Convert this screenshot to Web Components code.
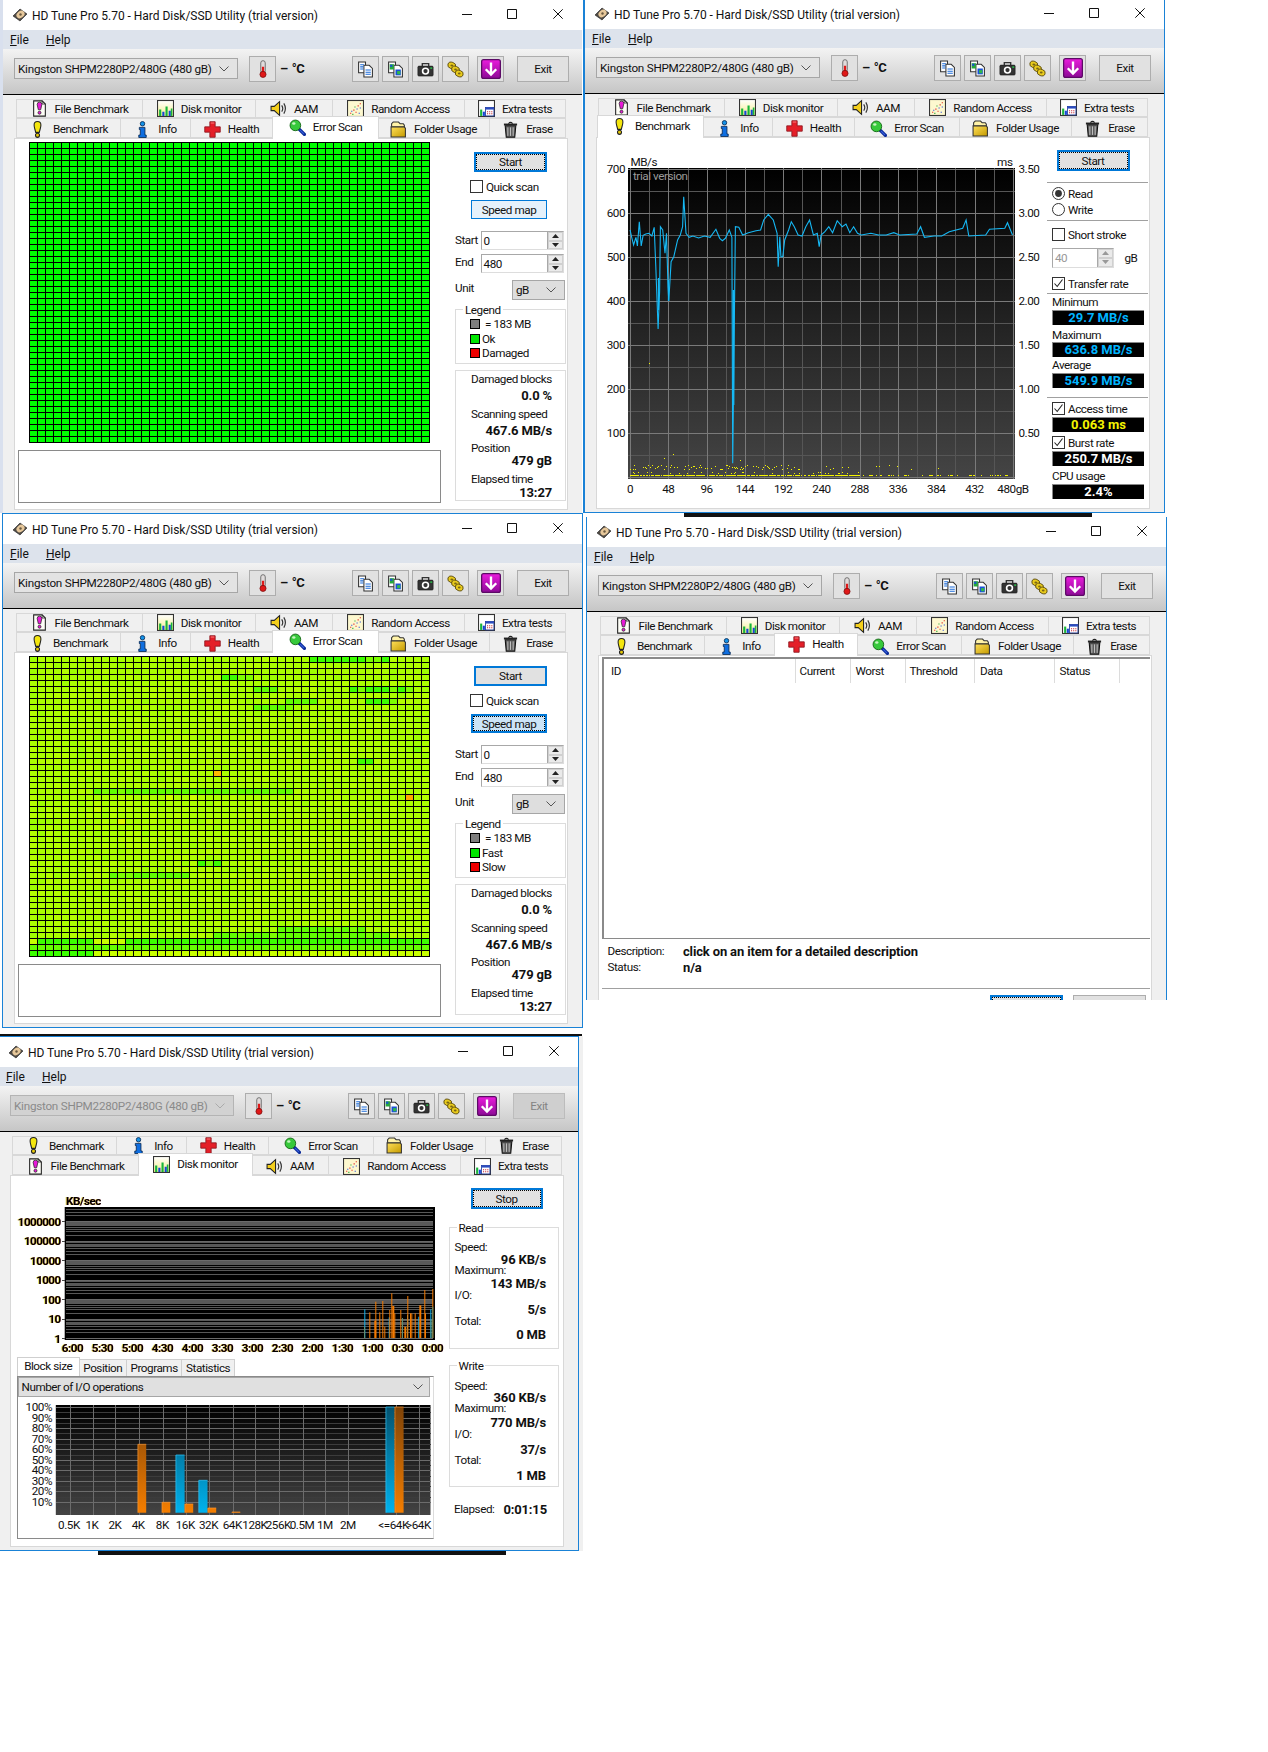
<!DOCTYPE html>
<html><head><meta charset="utf-8"><title>HD Tune Pro</title>
<style>html,body{margin:0;padding:0;background:#fff}</style></head>
<body>
<hd-desktop>
  <hd-sliver style="left:684px;top:512px;width:408px;height:5px"></hd-sliver>
  <hd-sliver style="left:0;top:1034px;width:582px;height:2px"></hd-sliver>
  <hd-sliver style="left:98px;top:1551px;width:408px;height:4px"></hd-sliver>
  <hd-window style="left:3px;top:0;height:513px;box-shadow:-3px 0 0 #d9e0ee" top="file" active="Error Scan"><scan-panel mode="ok"></scan-panel></hd-window>
  <hd-window style="left:585px;top:-1px;height:513px;box-shadow:0 0 0 1px #1a82d6,-1px 0 0 1px #1a82d6" top="file" active="Benchmark"><bench-panel></bench-panel></hd-window>
  <hd-window style="left:3px;top:514px;height:513px;box-shadow:0 0 0 1px #1a82d6" top="file" active="Error Scan"><scan-panel mode="speed"></scan-panel></hd-window>
  <hd-window style="left:587px;top:517px;height:483px;box-shadow:-1px 0 0 #1a82d6,1px 0 0 #1a82d6" top="file" active="Health"><health-panel></health-panel></hd-window>
  <hd-window style="left:-1px;top:1037px;height:513px;box-shadow:0 0 0 1px #1a82d6,4px 0 0 1px #f0f0f0" top="bench" active="Disk monitor" locked><monitor-panel></monitor-panel></hd-window>
</hd-desktop>
<script>
const I=(inner,w=16,h=16)=>`<svg xmlns="http://www.w3.org/2000/svg" width="${w}" height="${h}" viewBox="0 0 16 16">${inner}</svg>`;
const ICONS={
app:`<path d="M1 9 8 2l7 5-7 7z" fill="#4f4a44" stroke="#222" stroke-width=".6"/><ellipse cx="8.5" cy="7.5" rx="4.4" ry="3.4" transform="rotate(-40 8.5 7.5)" fill="#e6c79a"/><circle cx="8.5" cy="7.5" r="1.2" fill="#6b5a40"/>`,
file:`<path d="M2.5.8h8l3 3v11.4h-11z" fill="#fdfdf6" stroke="#222"/><path d="M10.5.8v3h3" fill="none" stroke="#222" stroke-width=".7"/><path d="M5.8 4.200a2.200 2.200 0 0 1 4.400 0l-1.100 5H6.900z" fill="#e81ad8" stroke="#222" stroke-width=".7"/><circle cx="8" cy="12" r="1.400" fill="#e81ad8" stroke="#222" stroke-width=".7"/>`,
disk:`<defs><linearGradient id="dk" x1="0" y1="0" x2="0" y2="1"><stop offset="0" stop-color="#fff"/><stop offset="1" stop-color="#f7ef8c"/></linearGradient></defs><rect x=".5" y=".5" width="15" height="15" fill="url(#dk)" stroke="#333"/><path d="M2 15V9h2v6zM8 15V6h2v9z" fill="#17b53a"/><path d="M5 15v-4h2v4zM11 15V10h2v5z" fill="#1546d8"/><path d="M13 15V8h1.500v7z" fill="#17b53a"/>`,
aam:`<path d="M1 6h3l5-4.500v13L4 10H1z" fill="#f4cf1c" stroke="#222"/><path d="M11 5q2 3 0 6M13 3.200q3 4.800 0 9.600" fill="none" stroke="#333" stroke-width="1.100"/>`,
rand:`<rect x=".5" y=".5" width="15" height="15" fill="#fdf8cf" stroke="#333"/><path d="M3 12h1v1H3zM6 9h1v1H6zM10 5h1v1h-1zM12 3h1v1h-1zM8 11h1v1H8z" fill="#e01818"/><path d="M4 10h1v1H4zM9 8h1v1H9zM12 7h1v1h-1zM11 12h1v1h-1z" fill="#1a3ee0"/><path d="M7 6h1v1H7zM5 13h1v1H5z" fill="#19a030"/>`,
extra:`<rect x=".5" y=".5" width="15" height="15" fill="#fff" stroke="#333"/><path d="M2 15V9h2v6z" fill="#19b53a"/><path d="M4.500 15v-4h2v4z" fill="#1546d8"/><rect x="7" y="7" width="8" height="8" fill="#fff" stroke="#223a98" stroke-width=".8"/><rect x="7" y="7" width="8" height="2" fill="#2a4bc0"/><path d="M8.500 10.500h1v1h-1zM10.500 10.500h1v1h-1zM12.500 10.500h1v1h-1zM8.500 12.500h1v1h-1zM10.500 12.500h1v1h-1zM12.500 12.500h1v1h-1z" fill="#c02030"/>`,
bench:`<path d="M4.800 3.700a3.200 3.200 0 0 1 6.400 0c0 2.300-1 4.600-1.500 7H6.300c-.5-2.400-1.500-4.700-1.500-7z" fill="#f4e60e" stroke="#222"/><circle cx="8" cy="13.500" r="1.900" fill="#e5c80a" stroke="#222"/>`,
info:`<circle cx="8" cy="2.600" r="2.100" fill="#1492e8" stroke="#0a2a55" stroke-width=".8"/><path d="M5 6h5.300v7.200h1.200v2.300H4.500v-2.300h1.400V8H5z" fill="#0f6ee0" stroke="#0a2a55" stroke-width=".8"/>`,
health:`<path d="M5.500.7h5v4.800h4.800v5h-4.800v4.800h-5v-4.800H.7v-5h4.800z" fill="#e41f28" stroke="#8d1820" stroke-width=".8"/><path d="M6.300 1.500h3.400v.8H6.300z" fill="#ff8a8a"/>`,
error:`<path d="M9.500 9.500l5 5" stroke="#0c2c9a" stroke-width="3.200" stroke-linecap="round"/><path d="M10.500 10.500l3.500 3.500" stroke="#3a62e0" stroke-width="1"/><circle cx="6" cy="6" r="5" fill="#37c93b" stroke="#1a6a1a" stroke-width=".9"/><ellipse cx="4.500" cy="4.300" rx="1.600" ry="1.200" fill="#c8f5c0"/>`,
folder:`<path d="M1.500 4V2.500L3 1h5l1.500 1.500h3l1 1.500v2H1.500z" fill="#fff3a8" stroke="#333"/><defs><linearGradient id="fo" x1="0" y1="0" x2="1" y2="1"><stop offset="0" stop-color="#ffe05a"/><stop offset="1" stop-color="#c49a00"/></linearGradient></defs><path d="M1 5.500h12.500l1 1.500v8H1z" fill="url(#fo)" stroke="#333"/>`,
erase:`<path d="M3 4.500h10L12 15.300H4z" fill="#5e5e5e" stroke="#111"/><path d="M5.500 6v8M8 6v8M10.500 6v8" stroke="#c4c4c4" stroke-width=".9"/><path d="M1.800 3.300h12.400" stroke="#222" stroke-width="1.800"/><path d="M6 2.400Q8 .2 10 2.400" fill="none" stroke="#222"/>`,
thermo:`<rect x="6" y=".6" width="4" height="11" rx="2" fill="#e0dcdc" stroke="#555" stroke-width=".7"/><rect x="7" y="6" width="2" height="7" fill="#e01818"/><circle cx="8" cy="12.800" r="2.700" fill="#e01818" stroke="#7a1010" stroke-width=".7"/>`,
copy:`<path d="M1.500 1h6.500v10H1.500z" fill="#fff" stroke="#333"/><path d="M6.500 4h5l3 3v8h-8z" fill="#fff" stroke="#333"/><path d="M3 3.500h3.500M3 5.500h3M3 7.500h3M8 8.500h5M8 10.500h5M8 12.500h5" stroke="#1a6ad8"/>`,
copyimg:`<path d="M1.500 1h6.500v10H1.500z" fill="#fff" stroke="#333"/><path d="M6.500 4h5l3 3v8h-8z" fill="#fff" stroke="#333"/><rect x="2.500" y="3" width="4" height="5" fill="#26a83c"/><rect x="3" y="3.500" width="2" height="2" fill="#1a50d8"/><rect x="8" y="8" width="5" height="5.500" fill="#1a50d8"/><rect x="9.500" y="9.500" width="3" height="3" fill="#2fb84a"/>`,
camera:`<rect x=".8" y="4.800" width="14.400" height="9.400" rx="1" fill="#333" stroke="#111" stroke-width=".5"/><path d="M5 4.800V2.500h6v2.300" fill="none" stroke="#333" stroke-width="1.300"/><circle cx="8" cy="9.500" r="3.500" fill="#fff"/><circle cx="8" cy="9.500" r="2" fill="#333"/><rect x="12.500" y="6" width="1.800" height="1.400" fill="#29c04a"/>`,
coins:`<g fill="#e9cb1c" stroke="#5a4a10" stroke-width=".8"><ellipse cx="4.500" cy="4.200" rx="3.800" ry="3" transform="rotate(20 4.500 4.200)"/><ellipse cx="8" cy="8" rx="3.800" ry="3" transform="rotate(20 8 8)"/><ellipse cx="11.500" cy="11.800" rx="3.800" ry="3" transform="rotate(20 11.500 11.800)"/></g><g fill="#7a6614"><ellipse cx="4.500" cy="4.200" rx="1.300" ry=".9"/><ellipse cx="8" cy="8" rx="1.300" ry=".9"/><ellipse cx="11.500" cy="11.800" rx="1.300" ry=".9"/></g>`,
down:`<defs><linearGradient id="dn" x1="0" y1="0" x2="0" y2="1"><stop offset="0" stop-color="#ea1cdc"/><stop offset="1" stop-color="#8c0a96"/></linearGradient></defs><rect x=".5" y=".5" width="15" height="15" rx="1.600" fill="url(#dn)" stroke="#5c0a66"/><path d="M8 2.800v9.500M3.800 8.200 8 12.500l4.200-4.300" fill="none" stroke="#fff" stroke-width="1.900"/>`
};
const chev=(c='#555')=>`<svg width="10" height="6" viewBox="0 0 10 6"><path d="M.5.5 5 5 9.500.5" fill="none" stroke="${c}"/></svg>`;

class Base extends HTMLElement{
  connectedCallback(){ if(this.shadowRoot) return; const r=this.attachShadow({mode:'open'}); r.innerHTML=this.html(); }
}
function place(top,items){
  let p=top,o='';
  for(const [y,h,html,ml] of items){
    o+=`<div style="margin-top:${+(y-p).toFixed(2)}px;height:${h}px;margin-left:${ml||0}px;display:flex;align-items:center">${html}</div>`;
    p=y+h;
  }
  return o;
}
const T=(c,html,ml)=>[c-6.5,13,html,ml];
const Rv=(c,html,r)=>[c-6.5,13,`<b style="margin-left:auto;margin-right:${r}px;font-size:13px;letter-spacing:-.15px;white-space:nowrap">${html}</b>`,0];

class HdDesktop extends Base{html(){return `<style>:host{display:block;position:relative;width:1268px;height:1752px;overflow:hidden;background:#fff;font:11.700px Roboto,"Liberation Sans",sans-serif;letter-spacing:-.45px;color:#111}</style><slot></slot>`}}
class HdSliver extends Base{html(){return `<style>:host{display:block;position:absolute;background:#111;overflow:hidden}</style>`}}
class HdIcon extends Base{html(){
  const n=this.getAttribute('name'),s=+(this.getAttribute('size')||17);
  return `<style>:host{display:inline-flex;flex:none;width:${s}px;height:${s}px}svg{display:block}</style>${I(ICONS[n],s,s)}`}}
class HdButton extends Base{html(){return `<style>
:host{display:inline-flex;box-sizing:border-box;align-items:center;justify-content:center;flex:none;background:#e1e1e1;border:1px solid #adadad;color:#111;white-space:nowrap}
:host([kind=focus]){border:2px solid #0078d7;outline:1px dotted #000;outline-offset:-3px}
:host([kind=blue]){border:2px solid #0078d7}
:host([kind=hover]){border:1px solid #0078d7;background:#e5f1fb}
:host([kind=hoverfocus]){border:2px solid #0078d7;background:#cce4f7;outline:1px dotted #000;outline-offset:-3px}
:host([kind=disabled]){background:#cfcfcf;border-color:#bcbcbc;color:#838383}
</style><slot></slot>`}}
class HdSelect extends Base{html(){return `<style>
:host{display:flex;box-sizing:border-box;align-items:center;flex:none;background:var(--bg,#e3e3e3);border:1px solid #a6a6a6;padding:0 8px 0 3px;color:#111;white-space:nowrap}
:host([disabled]){color:#8a8a8a;background:#d2d2d2;border-color:#b4b4b4}
span{flex:1}</style><span><slot></slot></span>${chev(this.hasAttribute('disabled')?'#aaa':'#555')}`}}
class HdSpin extends Base{html(){
  const tri=d=>`<div class="b"><svg width="7" height="4" viewBox="0 0 7 4"><path d="${d?'M0 0h7L3.500 4z':'M0 4h7L3.500 0z'}" fill="${this.hasAttribute('disabled')?'#999':'#222'}"/></svg></div>`;
  return `<style>
:host{display:flex;box-sizing:border-box;flex:none;background:#fff;border:1px solid #a8a8a8;border-right-color:#ddd;border-bottom-color:#ddd;color:#111}
:host([disabled]){color:#999}
span{flex:1;padding-left:2px;align-self:center}
.s{width:15px;display:flex;flex-direction:column;border-left:1px solid #a8a8a8}
.b{flex:1;display:flex;align-items:center;justify-content:center;background:#eaeaea;border:1px solid #d0d0d0}
</style><span><slot></slot></span><div class="s">${tri(0)}${tri(1)}</div>`}}
class HdCheck extends Base{html(){
  const c=this.hasAttribute('checked');
  return `<style>:host{display:inline-flex;align-items:center;color:#111;white-space:nowrap}
.b{box-sizing:border-box;width:13px;height:13px;background:#fff;border:1px solid #333;margin-right:3px;display:flex}</style>
<div class="b">${c?'<svg width="11" height="11" viewBox="0 0 11 11"><path d="M1.500 5.500 4.200 8.500 9.500 1.500" fill="none" stroke="#222" stroke-width="1.100"/></svg>':''}</div><slot></slot>`}}
class HdRadio extends Base{html(){
  const c=this.hasAttribute('checked');
  return `<style>:host{display:inline-flex;align-items:center;white-space:nowrap}svg{margin-right:3px}</style>
<svg width="13" height="13" viewBox="0 0 13 13"><circle cx="6.500" cy="6.500" r="6" fill="#fff" stroke="#333"/>${c?'<circle cx="6.500" cy="6.500" r="3.400" fill="#333"/>':''}</svg><slot></slot>`}}
class HdGroup extends Base{html(){
  const l=this.getAttribute('label');
  return `<style>:host{display:block;box-sizing:border-box;border:1px solid #dcdcdc;background:#fff;width:100%;height:100%}
.l{height:0;margin-left:${this.getAttribute('lx')||8}px}.l span{position:relative;top:-7px;background:#fff;padding:0 2px;display:inline-block;line-height:13px}</style>
${l?`<div class="l"><span>${l}</span></div>`:''}<slot></slot>`}}
class HdReadout extends Base{html(){return `<style>:host{display:flex;box-sizing:border-box;width:92px;height:15px;align-items:center;justify-content:center;background:#000;border-top:1px solid #888;border-left:1px solid #888;font-weight:700;font-size:13px;letter-spacing:0;color:var(--c,#00b4ff);white-space:nowrap}</style><slot></slot>`}}

const TABS={file:[['File Benchmark','file',127],['Disk monitor','disk',113],['AAM','aam',77],['Random Access','rand',132],['Extra tests','extra',101]],
 bench:[['Benchmark','bench',105],['Info','info',70],['Health','health',82],['Error Scan','error',105],['Folder Usage','folder',112],['Erase','erase',76]]};
class HdTabs extends Base{html(){
  const top=this.getAttribute('top'),act=this.getAttribute('active');
  const rows=top==='file'?['file','bench']:['bench','file'];
  const row=(k,i)=>`<div class="r r${i}">${TABS[k].map(([n,ic,w])=>{const a=n===act;
    return `<div class="t${a?' a':''}" style="width:${a?w+2:w}px"><hd-icon name="${ic}"></hd-icon><span>${n}</span></div>`}).join('')}</div>`;
  return `<style>:host{display:block;flex:none;padding:4px 0 0 13px;color:#111}
.r{display:flex}.r0{height:19px}.r1{height:20px}
.t{box-sizing:border-box;flex:none;display:flex;align-items:center;justify-content:center;gap:7px;border:1px solid #d8d8d8;border-left:0;background:#f0f0f0;white-space:nowrap}
.r1 .t{padding-top:2px}
.t:first-child{border-left:1px solid #d8d8d8}
.r1 .t.a{position:relative;z-index:2;background:#fff;border:1px solid #d8d8d8;border-bottom:0;margin:-2px -1px -1px -1px;padding:0 0 2px}
</style>${row(rows[0],0)}${row(rows[1],1)}`}}

class HdToolbar extends Base{html(){
  const lock=this.hasAttribute('locked');
  const b=(n,s=17)=>`<hd-button class="ib"><hd-icon name="${n}" size="${s}"></hd-icon></hd-button>`;
  return `<style>:host{display:flex;flex:none;box-sizing:border-box;height:46px;padding:7px 0 0 11px;align-items:flex-start;border-bottom:1px solid #000;background:linear-gradient(#f3f3f3,#c6c6c6)}
hd-button.ib{width:27px;height:26px}
hd-select{width:224px;height:21px;margin-top:2px;letter-spacing:-.25px}
.th{margin-left:11px}
.tp{width:76px;margin:5px 0 0 0;padding-left:4px;box-sizing:border-box;font-weight:700;font-size:13px;letter-spacing:-.4px;word-spacing:1px}
.g{display:flex;gap:3px}
.pu{margin-left:8px}.ex{margin-left:13px;width:52px;height:26px}
</style><hd-select ${lock?'disabled':''}>Kingston SHPM2280P2/480G (480 gB)</hd-select>
<hd-button class="ib th"><hd-icon name="thermo" size="18"></hd-icon></hd-button><div class="tp">– °C</div>
<div class="g">${b('copy')}${b('copyimg')}${b('camera')}${b('coins')}</div>
<hd-button class="ib pu"><hd-icon name="down" size="20"></hd-icon></hd-button>
<hd-button class="ex" ${lock?'kind="disabled"':''}>Exit</hd-button>`}}

class HdWindow extends Base{html(){
  return `<style>
:host{display:flex;flex-direction:column;position:absolute;width:579px;box-sizing:border-box;background:#f0f0f0;overflow:hidden}
.ti{height:30px;flex:none;background:#fff;display:flex;align-items:center}
.ti hd-icon{margin-left:9px;margin-right:4px}
.ti span{flex:1;padding-top:1px;white-space:nowrap;font-size:12px;letter-spacing:-.03px}
.wc{display:flex;gap:35px;margin-right:19px;align-items:center;padding-bottom:2px}
.me{height:19px;flex:none;background:#dde3ec;display:flex;align-items:center;padding-left:7px;font-size:12px;letter-spacing:0}
.me span{width:36px}
.pa{flex:none;box-sizing:border-box;width:554px;height:372px;margin-left:11px;background:#fff;border:1px solid #d8d8d8;overflow:hidden}
</style>
<div class="ti"><hd-icon name="app" size="16"></hd-icon><span>HD Tune Pro 5.70 - Hard Disk/SSD Utility (trial version)</span>
<div class="wc"><svg width="10" height="10" viewBox="0 0 10 10"><path d="M0 5.500h10" stroke="#111"/></svg><svg width="10" height="10" viewBox="0 0 10 10" style="margin-right:1px"><path d="M.5.500h9v9h-9z" fill="none" stroke="#111"/></svg><svg width="10" height="10" viewBox="0 0 10 10"><path d="M.3.300l9.400 9.400M9.700.300.3 9.700" stroke="#111" stroke-width="1"/></svg></div></div>
<div class="me"><span><u>F</u>ile</span><span><u>H</u>elp</span></div>
<hd-toolbar ${this.hasAttribute('locked')?'locked':''}></hd-toolbar>
<hd-tabs top="${this.getAttribute('top')}" active="${this.getAttribute('active')}"></hd-tabs>
<div class="pa"><slot></slot></div>`}}

function rng(s){return ()=>{s=(s*1664525+1013904223)>>>0;return s/4294967296}}
function gridSvg(mode){
  const W=401,H=301;let body='';
  if(mode==='ok'){body=`<rect width="${W}" height="${H}" fill="#00ff00"/>`}
  else{
    const R=rng(42),G={};const add=(c,r,k)=>{(G[k]=G[k]||[]).push(`M${c*8+1} ${r*6+1}h7v5h-7z`)};
    const sp={};const set=(r,a,b,k)=>{for(let c=a;c<=b;c++)sp[r+'_'+c]=k};
    const g='#3cff00',g2='#60ff00';
    set(0,35,44,g);set(3,24,27,g);set(5,28,30,g2);set(5,40,47,g);set(7,32,35,g2);set(7,42,45,g);set(8,28,32,g2);
    set(15,48,48,'#80ff00');set(17,41,42,g);set(22,8,32,g2);set(34,21,23,g);set(36,10,19,g2);
    set(45,31,41,g2);set(46,23,44,g2);set(47,1,7,g);set(47,12,49,g);set(48,0,49,'#66ff00');set(49,0,7,g);
    set(19,23,23,'#ffb800');set(23,47,47,'#ffa800');set(23,17,17,'#ccff00');set(23,20,20,'#ccff00');set(27,11,11,'#dcf800');set(25,8,8,'#c4ff00');
    for(let r=0;r<50;r++)for(let c=0;c<50;c++){
      let k=sp[r+'_'+c];
      if(k&&(k===g2||k===g)&&r<47&&R()<.2)k='#7cff00';
      if(!k){const v=R();k=r>=47?'#c8ff00':(v<.25?'#b4ff00':v<.33?'#9eff00':'#aaff00')}
      add(c,r,k);
    }
    for(const k in G)body+=`<path d="${G[k].join('')}" fill="${k}"/>`;
  }
  let l='';for(let i=0;i<=50;i++){l+=`M${i*8+.5} 0V${H}M0 ${i*6+.5}H${W}`}
  const bg=mode==='ok'?'':`<rect width="${W}" height="${H}" fill="#000"/>`;
  return `<svg width="${W}" height="${H}" viewBox="0 0 ${W} ${H}" shape-rendering="crispEdges" style="display:block">${bg}${body}<path d="${l}" stroke="#000" fill="none"/></svg>`;
}
const sw=c=>`<i style="display:block;width:8px;height:8px;background:${c};border:1px solid #000;box-sizing:content-box;margin-right:2px;flex:none"></i>`;
class ScanPanel extends Base{html(){
  const sp=this.getAttribute('mode')==='speed';
  const legend=place(310,[
    T(324,`${sw('#7e7e7e')}<span style="margin-left:3px">= 183 MB</span>`,14),
    T(339,`${sw('#00e600')}${sp?'Fast':'Ok'}`,14),
    T(353,`${sw('#ee0000')}${sp?'Slow':'Damaged'}`,14)]);
  const stats=place(371,[
    T(379,'Damaged blocks',15),Rv(395.7,'0.0 %',13),T(414,'Scanning speed',15),Rv(430.7,'467.6 MB/s',13),
    T(447.7,'Position',15),Rv(461,'479 gB',13),T(479,'Elapsed time',15),Rv(492.3,'13:27',13)]);
  const right=place(139,[
    [152,20,`<hd-button kind="${sp?'blue':'focus'}" style="width:73px;height:20px">Start</hd-button>`,19],
    [180,13,`<hd-check>Quick scan</hd-check>`,15],
    [200,19,`<hd-button kind="${sp?'hoverfocus':'hover'}" style="width:76px;height:19px">Speed map</hd-button>`,16],
    [231,19,`<span style="width:25.600px;margin-top:-2px">Start</span><hd-spin style="width:83.400px;height:19px">0</hd-spin>`,0],
    [254,19,`<span style="width:25.600px;margin-top:-3px">End</span><hd-spin style="width:83.400px;height:19px">480</hd-spin>`,0],
    [280,20,`<span style="width:57px;margin-top:-4px">Unit</span><hd-select style="width:53px;height:20px;--bg:#dedede">gB</hd-select>`,0],
    [309,55,`<hd-group label="Legend" lx="7">${legend}</hd-group>`,0],
    [370,131,`<hd-group>${stats}</hd-group>`,0]]);
  return `<style>:host{display:flex;width:552px;height:370px}
.l{width:430px;flex:none}.g{margin:3px 0 0 14px}.m{box-sizing:border-box;width:423px;height:53px;margin:7px 0 0 3px;background:#fff;border:1px solid #8a8a8a}
.r{margin-left:10px;width:111px;flex:none}</style>
<div class="l"><div class="g">${gridSvg(sp?'speed':'ok')}</div><div class="m"></div></div><div class="r">${right}</div>`}}

function benchSvg(){
  const x0=630.1,st=19.135,yv=v=>169+(700-v)*.44;let o='';
  o+=`<defs><linearGradient id="bg" x1="0" y1="0" x2="0" y2="1"><stop offset="0" stop-color="#000"/><stop offset="1" stop-color="#454545"/></linearGradient></defs>`;
  o+=`<rect x="628" y="168" width="387" height="311" fill="url(#bg)"/>`;
  let g1='',g2='';
  for(let i=0;i<=14;i++){const y=Math.round(169+22*i)+.5;const p=`M628 ${y}H1015`;if(i%2==0)g1+=p;else g2+=p}
  for(let i=0;i<=20;i++){const x=Math.round(x0+st*i)+.5;const p=`M${x} 168V479`;if(i%2==0)g1+=p;else g2+=p}
  o+=`<g shape-rendering="crispEdges" fill="none"><path d="${g2}" stroke="#565656"/><path d="${g1}" stroke="#7a7a7a"/></g>`;
  const pts=[[131,690],[135,712],[140,735],[146,712],[150,738],[155,665],[160,738],[165,706],[172,702],[180,700],[188,708],[194,682],[198,800],[204,987],[208,875],[210,680],[216,690],[222,760],[226,700],[230,860],[232,903],[238,785],[245,770],[255,720],[262,705],[268,680],[271,590],[277,700],[285,712],[295,708],[310,714],[325,708],[340,712],[355,688],[365,715],[372,722],[380,715],[390,690],[397,712],[399,1390],[403,1000],[406,680],[415,682],[425,705],[440,698],[460,692],[472,690],[480,660],[492,643],[505,660],[515,700],[518,800],[522,710],[525,770],[530,770],[535,720],[545,690],[552,665],[560,680],[570,705],[580,708],[590,680],[600,660],[610,705],[620,700],[625,740],[630,705],[640,695],[650,680],[660,698],[672,662],[685,680],[695,672],[705,698],[715,680],[725,700],[735,705],[760,700],[780,705],[800,705],[820,698],[835,705],[880,702],[890,680],[900,712],[925,708],[945,708],[965,695],[1000,685],[1009,660],[1016,708],[1060,705],[1070,688],[1110,685],[1117,668],[1130,705]];
  o+=`<polyline fill="none" stroke="#16b8f4" stroke-width="1.100" points="${pts.map(([x,y])=>(580+x/2.613).toFixed(1)+','+(y/3).toFixed(1)).join(' ')}"/>`;
  o+=`<path d="M733.500 290V405" stroke="#16b8f4" stroke-width="1.800"/><path d="M658.500 278V310M668.500 280V301" stroke="#16b8f4" stroke-width="1.300"/>`;
  const R=rng(7);let d='M649 363h1v1h-1z';
  for(let x=630;x<966;x+=1){const den=x<800?.42:x<900?.12:.03;if(R()<den){d+=`M${x} ${465+Math.floor(R()*5)}h1v1h-1z`}}
  for(let x=630;x<1010;x+=1){const den=x<860?.8:.28;if(R()<den){d+=`M${x} ${475}h1v1h-1z`}if(x<860&&R()<.12){d+=`M${x} ${472+Math.floor(R()*2)}h1v1h-1z`}}
  d+='M664 458h1v1h-1zM673 454h1v1h-1zM740 460h1v1h-1z';
  o+=`<path d="${d}" fill="#f4f400" shape-rendering="crispEdges"/>`;
  let tx='';
  [700,600,500,400,300,200,100].forEach((v,i)=>{const y=yv(v);tx+=`<text x="625" y="${y+4}" text-anchor="end">${v}</text><text x="1018.500" y="${y+4}">${(3.5-.5*i).toFixed(2)}</text>`});
  for(let i=0;i<10;i++){tx+=`<text x="${x0+st*2*i}" y="493" text-anchor="middle">${48*i}</text>`}
  tx+=`<text x="1013" y="493" text-anchor="middle">480gB</text><text x="630.500" y="166">MB/s</text><text x="1012.500" y="166" text-anchor="end">ms</text>`;
  o+=`<text x="633" y="180" fill="#9a9a9a">trial version</text>`;
  return `<svg width="450" height="370" viewBox="597 138 450 370" style="display:block;overflow:visible" fill="#111">${o}${tx}</svg>`;
}
class BenchPanel extends Base{html(){
  const hr=y=>[y,1,`<div style="width:101px;height:1px;background:#a0a0a0"></div>`,0];
  const ro=(y,txt,c)=>[y,15,`<hd-readout style="--c:${c}">${txt}</hd-readout>`,5];
  const r=place(138,[
    [150,21,`<hd-button kind="focus" style="width:73px;height:21px">Start</hd-button>`,9.5],
    hr(181.5),
    [185.6,16,`<hd-radio checked>Read</hd-radio>`,5],
    [201.6,16,`<hd-radio>Write</hd-radio>`,5],
    hr(219.8),
    [226.6,16,`<hd-check>Short stroke</hd-check>`,5],
    [248,20,`<hd-spin disabled style="width:62px;height:20px">40</hd-spin><span style="margin-left:10.500px">gB</span>`,5],
    [275.7,16,`<hd-check checked>Transfer rate</hd-check>`,5],
    hr(292.7),
    T(302,'Minimum',5),ro(310,'29.7 MB/s','#00b4ff'),
    T(335,'Maximum',5),ro(342,'636.8 MB/s','#00b4ff'),
    T(365,'Average',5),ro(373,'549.9 MB/s','#00b4ff'),
    hr(396.7),
    [401,16,`<hd-check checked>Access time</hd-check>`,5],ro(417,'0.063 ms','#f4f400'),
    [435,16,`<hd-check checked>Burst rate</hd-check>`,5],ro(451,'250.7 MB/s','#fff'),
    T(476,'CPU usage',5),ro(484,'2.4%','#fff')]);
  return `<style>:host{display:flex;width:552px;height:370px}.l{width:450px;flex:none}.r{width:101px;flex:none}</style><div class="l">${benchSvg()}</div><div class="r">${r}</div>`}}

class HealthPanel extends Base{html(){
  const cols=[['ID',191.5,7],['Current',55,4],['Worst',55,5],['Threshold',69.6,4],['Data',80.4,5],['Status',65,4]];
  return `<style>:host{display:block;width:552px;height:370px}
.lv{box-sizing:border-box;margin:1px 0 0 3px;width:548px;height:282px;background:#fff;border:1px solid #8a8a8a;border-right:0;border-left-width:2px;border-top-width:2px}
.h{display:flex;height:24px}.h div{box-sizing:border-box;padding-top:5px;border-right:1px solid #dcdcdc;flex:none;white-space:nowrap}
.d{display:grid;grid-template-columns:75.5px 1fr;margin:6px 0 0 8.500px;row-gap:3px;line-height:13px}
.d b{font-size:13px;letter-spacing:-.15px}
.hr{margin:14px 0 0 3px;width:548px;height:1px;background:#a0a0a0}
.bt{display:flex;gap:10px;margin:6px 0 0 391px}
</style><div class="lv"><div class="h">${cols.map(([n,w,p])=>`<div style="width:${w}px;padding-left:${p}px">${n}</div>`).join('')}</div></div>
<div class="d"><span>Description:</span><b>click on an item for a detailed description</b><span>Status:</span><b>n/a</b></div>
<div class="hr"></div><div class="bt"><hd-button kind="focus" style="width:73px;height:21px"></hd-button><hd-button style="width:73px;height:21px"></hd-button></div>`}}

function monSvg(){
  let o=`<rect x="64.700" y="1207" width="370.300" height="133" fill="#000"/>`;
  const yOf=(d)=>1338-d*19.5;let mi='',ma='';
  for(let d=0;d<=6;d++){
    ma+=`M66 ${Math.round(yOf(d))+.5}H432.500`;
    for(let k=2;k<10;k++){const y=yOf(d+Math.log10(k));if(y<1209)continue;mi+=`M66 ${Math.round(y)+.5}H432.500`}
  }
  let ti='';[0,1,2,3,4,5,6].forEach(d=>{ti+=`M62 ${Math.round(yOf(d))+.5}H64.700`});
  o+=`<g shape-rendering="crispEdges" fill="none"><path d="${mi}" stroke="#585858"/><path d="${ma}" stroke="#6a6a6a"/><path d="${ti}" stroke="#444"/></g>`;
  const bars=[[43,388,'b'],[58,397,'o'],[73,422,'o',2],[76,365,'o'],[88,397,'o'],[97,363,'o'],[103,440,'o'],[116,412,'b'],[118,390,'o'],[124,340,'o'],[127,378,'o',2],[133,400,'o'],[151,390,'o'],[163,440,'o',2],[171,405,'g'],[172,348,'o'],[180,400,'o'],[184,400,'o'],[194,400,'o'],[205,410,'b'],[208,376,'o',2],[223,330,'o'],[225,400,'o'],[241,388,'b'],[247,327,'o'],[247,380,'g']];
  const C={o:'#f47a00',b:'#12aee8',g:'#5f8f70'};
  bars.forEach(([x,t,c,w])=>{o+=`<rect x="${(350+x/3).toFixed(1)}" y="${(1180+t/3).toFixed(1)}" width="${w||1}" height="${(1338-(1180+t/3)).toFixed(1)}" fill="${C[c]}"/>`});
  o+=`<path d="M364.500 1327V1338M402.500 1318V1338M431 1320V1338" stroke="#5f8f70"/>`;
  let tx='';
  ['1000000','100000','10000','1000','100','10','1'].forEach((s,i)=>{tx+=`<text x="60.600" y="${yOf(6-i)+4.500}" text-anchor="end" style="letter-spacing:-.6px">${s}</text>`});
  ['6:00','5:30','5:00','4:30','4:00','3:30','3:00','2:30','2:00','1:30','1:00','0:30','0:00'].forEach((s,i)=>{tx+=`<text x="${72.500+30*i}" y="1352" text-anchor="middle">${s}</text>`});
  tx+=`<text x="66" y="1205">KB/sec</text>`;
  return `<svg width="436" height="181" viewBox="11 1176 436 181" style="display:block;overflow:visible;font-weight:700" fill="#000"><g>${o}</g><g style="filter:drop-shadow(.5px 0 0 rgba(230,0,40,.55)) drop-shadow(-.5px 0 0 rgba(210,210,0,.6))">${tx}</g></svg>`;
}
function ioSvg(){
  let o=`<defs><linearGradient id="ib" x1="0" y1="0" x2="0" y2="1"><stop offset="0" stop-color="#000"/><stop offset="1" stop-color="#444"/></linearGradient>
  <linearGradient id="bo" x1="0" y1="1404" x2="0" y2="1515" gradientUnits="userSpaceOnUse"><stop offset="0" stop-color="#7c4208"/><stop offset="1" stop-color="#f77f00"/></linearGradient>
  <linearGradient id="bb" x1="0" y1="1404" x2="0" y2="1515" gradientUnits="userSpaceOnUse"><stop offset="0" stop-color="#04506c"/><stop offset="1" stop-color="#00b4f0"/></linearGradient></defs>`;
  o+=`<rect x="55.300" y="1405" width="374.700" height="110" fill="url(#ib)"/>`;
  const vs=[68.5,91.5,114.4,137.7,161.8,184.8,208,231.8,254.4,277.8,301.5,324.4,347.4,394.8,417.8];
  const ys=[1407,1417.6,1428,1438.6,1449,1460,1470,1481,1491,1502];
  let g='',t='';
  ys.forEach(y=>g+=`M55.300 ${Math.round(y)+.5}H430`);
  for(let i=0;i<ys.length-1;i++)t+=`M55.300 ${Math.round((ys[i]+ys[i+1])/2)+.5}H430`;
  vs.forEach(x=>g+=`M${Math.round(x)+.5} 1405V1515`);
  o+=`<g shape-rendering="crispEdges" fill="none"><path d="${t}" stroke="#3c3c3c"/><path d="${g}" stroke="#6c6c6c"/></g>`;
  const b=(a,e,top,c)=>{const x=a/2.657,w=(e-a)/2.657,y=1340+top/3;o+=`<rect x="${x.toFixed(1)}" y="${y.toFixed(1)}" width="${w.toFixed(1)}" height="${(1512.7-y).toFixed(1)}" fill="url(#${c})"/><path d="M${x.toFixed(1)} 1512.700V${y.toFixed(1)}H${(x+w).toFixed(1)}" fill="none" stroke="${c==='bo'?'#ff9a30':'#30c8ff'}" stroke-width=".7"/>`};
  b(365,387,313,'bo');b(429,451,487,'bo');b(466,489,345,'bb');b(490,512,492,'bo');b(527,550,421,'bb');b(551,573,504,'bo');b(615,637,516,'bo');b(1024,1047,201,'bb');b(1048,1071,201,'bo');
  let tx='';
  ['100%','90%','80%','70%','60%','50%','40%','30%','20%','10%'].forEach((s,i)=>tx+=`<text x="51.500" y="${ys[i]+4}" text-anchor="end">${s}</text>`);
  const ls=['0.5K','1K','2K','4K','8K','16K','32K','64K','128K','256K','0.5M','1M','2M'];
  ls.forEach((s,i)=>tx+=`<text x="${vs[i]}" y="1529" text-anchor="middle">${s}</text>`);
  tx+=`<text x="393" y="1529" text-anchor="middle">&lt;=64K</text><text x="418" y="1529" text-anchor="middle">&gt;64K</text>`;
  return `<svg width="416" height="141" viewBox="17.500 1397 416 141" style="display:block;overflow:visible" fill="#111">${o}${tx}</svg>`;
}
class MonitorPanel extends Base{html(){
  const v=(c,s)=>[c-5.5,11,`<b style="margin-left:auto;margin-right:12px;font-size:13px;letter-spacing:-.15px;white-space:nowrap">${s}</b>`,0];
  const l=(c,s)=>[c-5.5,11,`<span>${s}</span>`,5];
  const read=place(1228,[l(1247,'Speed:'),v(1259,'96 KB/s'),l(1270,'Maximum:'),v(1283,'143 MB/s'),l(1295,'I/O:'),v(1309,'5/s'),l(1321,'Total:'),v(1334,'0 MB')]);
  const wr=place(1366,[l(1386,'Speed:'),v(1397,'360 KB/s'),l(1408,'Maximum:'),v(1422,'770 MB/s'),l(1434,'I/O:'),v(1449,'37/s'),l(1460,'Total:'),v(1475,'1 MB')]);
  const r=place(1176,[
    [1188,21,`<hd-button kind="focus" style="width:72px;height:21px">Stop</hd-button>`,23.5],
    [1227,122,`<hd-group label="Read" lx="7">${read}</hd-group>`,1.6],
    [1365,122,`<hd-group label="Write" lx="7">${wr}</hd-group>`,1.6],
    [1502.5,13,`<span>Elapsed:</span><b style="margin-left:auto;margin-right:12px;font-size:13px;letter-spacing:-.15px">0:01:15</b>`,7]]);
  const tabs=[['Block size',63.3,1],['Position',47],['Programs',55.7],['Statistics',52.3]];
  return `<style>:host{display:flex;width:552px;height:370px}
.l{width:436px;flex:none}.r{width:112px;flex:none}
.ts{display:flex;height:19px;margin-left:5.500px;align-items:flex-end}
.t{box-sizing:border-box;height:17px;flex:none;display:flex;align-items:center;justify-content:center;background:#f0f0f0;border:1px solid #cfcfcf;border-left:0;border-bottom:0;white-space:nowrap}
.t.a{height:19px;background:#fff;border-left:1px solid #cfcfcf;padding-bottom:2px}
.bx{box-sizing:border-box;margin-left:5.500px;width:417.500px;height:163px;border:1px solid #8a8a8a;border-right-color:#dcdcdc;border-bottom-color:#8a8a8a;background:#fff}
hd-select{width:412.700px;height:20px;margin:0 0 0 0;padding-right:6px;--bg:#e0e0e0}
.gr{margin-top:0}
</style><div class="l">${monSvg()}<div class="ts">${tabs.map(([n,w,a])=>`<div class="t${a?' a':''}" style="width:${w}px">${n}</div>`).join('')}</div>
<div class="bx"><hd-select>Number of I/O operations</hd-select><div class="gr">${ioSvg()}</div></div></div>
<div class="r">${r}</div>`}}

const defs={'hd-desktop':HdDesktop,'hd-sliver':HdSliver,'hd-icon':HdIcon,'hd-button':HdButton,'hd-select':HdSelect,'hd-spin':HdSpin,'hd-check':HdCheck,'hd-radio':HdRadio,'hd-group':HdGroup,'hd-readout':HdReadout,'hd-tabs':HdTabs,'hd-toolbar':HdToolbar,'hd-window':HdWindow,'scan-panel':ScanPanel,'bench-panel':BenchPanel,'health-panel':HealthPanel,'monitor-panel':MonitorPanel};
for(const k in defs)customElements.define(k,defs[k]);
</script>
</body></html>
